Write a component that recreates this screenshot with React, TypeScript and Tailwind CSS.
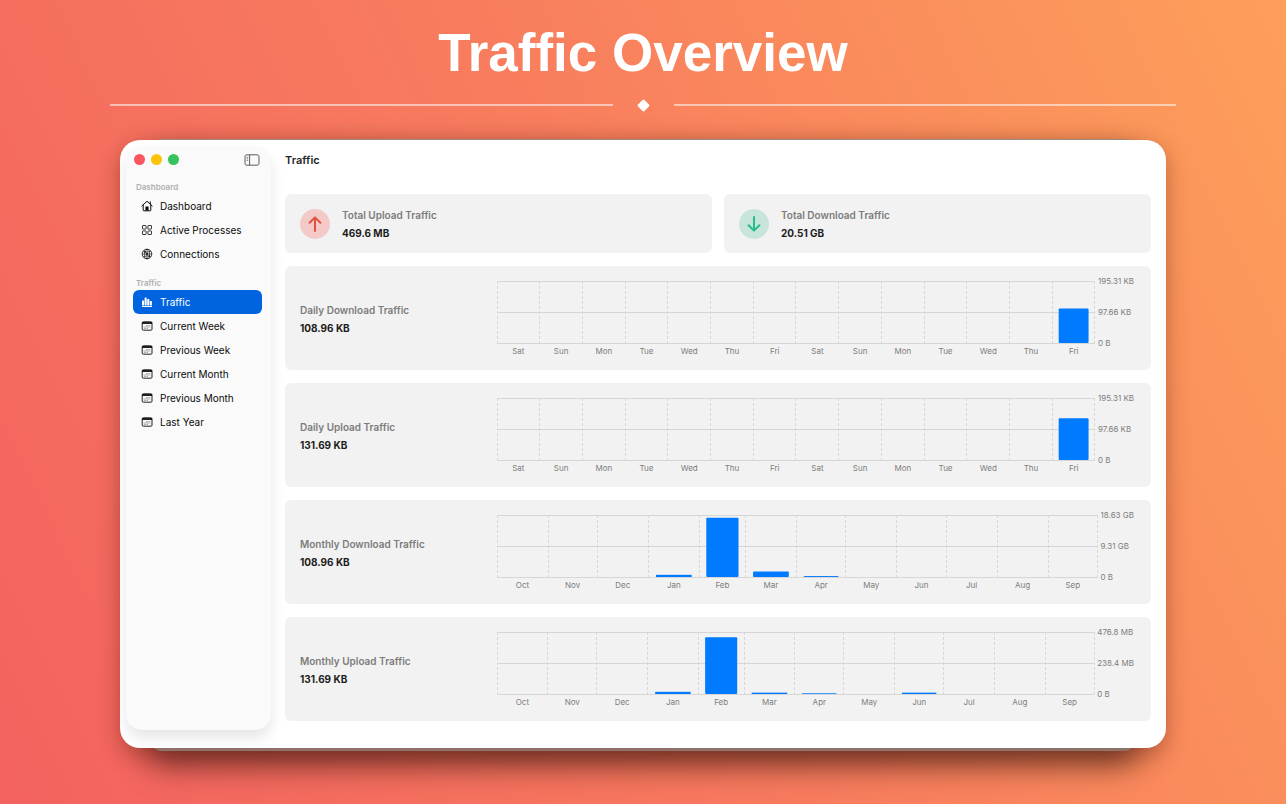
import { ReactNode } from "react";
import { clsx } from "clsx";

interface Column {
  label: string;
  days: number;
  value: number;
}

interface ChartCardProps {
  title: string;
  total: string;
  ticks: string[];
  columns: Column[];
}

const week = ["Sat", "Sun", "Mon", "Tue", "Wed", "Thu", "Fri"];

const months: [string, number][] = [
  ["Oct", 31],
  ["Nov", 30],
  ["Dec", 31],
  ["Jan", 31],
  ["Feb", 28],
  ["Mar", 31],
  ["Apr", 30],
  ["May", 31],
  ["Jun", 30],
  ["Jul", 31],
  ["Aug", 31],
  ["Sep", 30],
];

// values are a share of the top tick
const daily = (last: number): Column[] =>
  [...week, ...week].map((label, i) => ({ label, days: 1, value: i === 13 ? last : 0 }));

const monthly = (values: Record<string, number>): Column[] =>
  months.map(([label, days]) => ({ label, days, value: values[label] || 0 }));

const charts: ChartCardProps[] = [
  {
    title: "Daily Download Traffic",
    total: "108.96 KB",
    ticks: ["195.31 KB", "97.66 KB", "0 B"],
    columns: daily(0.558),
  },
  {
    title: "Daily Upload Traffic",
    total: "131.69 KB",
    ticks: ["195.31 KB", "97.66 KB", "0 B"],
    columns: daily(0.674),
  },
  {
    title: "Monthly Download Traffic",
    total: "108.96 KB",
    ticks: ["18.63 GB", "9.31 GB", "0 B"],
    columns: monthly({ Jan: 0.035, Feb: 0.955, Mar: 0.09, Apr: 0.015 }),
  },
  {
    title: "Monthly Upload Traffic",
    total: "131.69 KB",
    ticks: ["476.8 MB", "238.4 MB", "0 B"],
    columns: monthly({ Jan: 0.035, Feb: 0.915, Mar: 0.022, Apr: 0.012, Jun: 0.022 }),
  },
];

function HomeIcon() {
  return (
    <svg viewBox="0 0 12 12" className="size-3" fill="none" stroke="currentColor" strokeLinecap="round" strokeLinejoin="round">
      <path d="M.8 6 6 1.2 11.2 6M2.2 5v5.2q0 .6.6.6h6.4q.6 0 .6-.6V5M9.3 1.8v2" />
      <path d="M4.4 10.6V7q0-.4.4-.4h2.4q.4 0 .4.4v3.6z" fill="currentColor" stroke="none" />
    </svg>
  );
}

function GridIcon() {
  return (
    <svg viewBox="0 0 12 12" className="size-3" fill="none" stroke="currentColor" strokeWidth="0.8">
      <rect x="1.5" y="1.5" width="3.6" height="3.6" rx="0.5" />
      <rect x="6.9" y="1.5" width="3.6" height="3.6" rx="0.5" />
      <rect x="1.5" y="6.9" width="3.6" height="3.6" rx="0.5" />
      <rect x="6.9" y="6.9" width="3.6" height="3.6" rx="0.5" />
    </svg>
  );
}

function NetworkIcon() {
  return (
    <svg viewBox="0 0 12 12" className="size-3" fill="none" stroke="currentColor" strokeWidth="0.6">
      <circle cx="6" cy="6" r="4.8" strokeWidth="0.8" />
      <path d="M6 1.3v9.4M1.3 6h9.4M2.3 3.2q3.7 2 7.4 0M2.3 8.8q3.7-2 7.4 0" />
      <ellipse cx="6" cy="6" rx="2.6" ry="4.7" />
      <circle cx="6" cy="6" r="0.8" fill="currentColor" />
      <circle cx="4" cy="4" r="0.5" fill="currentColor" />
      <circle cx="8.2" cy="8" r="0.5" fill="currentColor" />
    </svg>
  );
}

function BarsIcon() {
  return (
    <svg viewBox="0 0 12 12" className="size-3" fill="currentColor">
      <rect x="1" y="4.6" width="2.1" height="4.8" rx="0.4" />
      <rect x="3.6" y="1.6" width="2.1" height="7.8" rx="0.4" />
      <rect x="6.2" y="3" width="2.1" height="6.4" rx="0.4" />
      <rect x="8.8" y="5" width="2.1" height="4.4" rx="0.4" />
      <rect x="0.8" y="10" width="10.4" height="0.9" rx="0.4" />
    </svg>
  );
}

function CalendarIcon() {
  return (
    <svg viewBox="0 0 12 12" className="size-3" fill="none" stroke="currentColor">
      <rect x="1.2" y="1.8" width="9.8" height="8.4" rx="1.1" strokeWidth="0.9" />
      <path d="M1.2 3h9.8" strokeWidth="1.8" />
      <g opacity="0.6">
        <path d="M5 5.6h4.4M2.8 7h6.6M2.8 8.4h4.6" strokeWidth="0.7" strokeDasharray="1 0.5" />
      </g>
    </svg>
  );
}

function SidebarIcon() {
  return (
    <svg viewBox="0 0 16 12" className="h-3 w-4" fill="none" stroke="currentColor">
      <rect x="1" y="0.8" width="14" height="10.4" rx="1.8" />
      <path d="M5.6 1v10" />
      <path d="M2.5 3.2h1.6M2.5 4.8h1.6M2.5 6.4h1.6" strokeWidth="0.7" />
    </svg>
  );
}

function ArrowIcon({ className }: { className?: string }) {
  return (
    <svg
      viewBox="0 0 18 18"
      className={clsx("size-[18px]", className)}
      fill="none"
      stroke="currentColor"
      strokeWidth="2"
      strokeLinecap="round"
      strokeLinejoin="round"
    >
      <path d="M9 16V2.4M3.6 7.8 9 2.4l5.4 5.4" />
    </svg>
  );
}

function NavItem({ icon, children, active }: { icon: ReactNode; children: ReactNode; active?: boolean }) {
  return (
    <li>
      <a
        href="#"
        aria-current={active ? "page" : undefined}
        className={clsx(
          "flex h-6 items-center gap-[7px] rounded-md pl-2 text-[10px]",
          active ? "bg-[#0064e1] text-white" : "text-[#0a0a0a]"
        )}
      >
        {icon}
        {children}
      </a>
    </li>
  );
}

function NavTitle({ children }: { children: ReactNode }) {
  return <h2 className="pl-[3px] text-[8px] leading-[14px] font-semibold text-[#b0b0b0]">{children}</h2>;
}

function Sidebar() {
  return (
    <aside className="mt-[6px] mb-[18px] ml-[6px] w-[145px] shrink-0 rounded-2xl bg-[#fafafa] pt-2 pr-[9px] pl-[7px] shadow-[0_8px_14px_rgba(0,0,0,0.1)]">
      <div className="flex h-[11px] items-center gap-[6px] pr-[2px] pl-px">
        <span className="size-[11px] rounded-full bg-[#fb5560]" />
        <span className="size-[11px] rounded-full bg-[#fdc309]" />
        <span className="size-[11px] rounded-full bg-[#37c35c]" />
        <button type="button" aria-label="Toggle sidebar" className="ml-auto text-[#5c5c5c]">
          <SidebarIcon />
        </button>
      </div>
      <nav className="flex flex-col gap-[10px] pt-[15px]">
        <section>
          <NavTitle>Dashboard</NavTitle>
          <ul>
            <NavItem icon={<HomeIcon />}>Dashboard</NavItem>
            <NavItem icon={<GridIcon />}>Active Processes</NavItem>
            <NavItem icon={<NetworkIcon />}>Connections</NavItem>
          </ul>
        </section>
        <section>
          <NavTitle>Traffic</NavTitle>
          <ul>
            <NavItem icon={<BarsIcon />} active>
              Traffic
            </NavItem>
            <NavItem icon={<CalendarIcon />}>Current Week</NavItem>
            <NavItem icon={<CalendarIcon />}>Previous Week</NavItem>
            <NavItem icon={<CalendarIcon />}>Current Month</NavItem>
            <NavItem icon={<CalendarIcon />}>Previous Month</NavItem>
            <NavItem icon={<CalendarIcon />}>Last Year</NavItem>
          </ul>
        </section>
      </nav>
    </aside>
  );
}

function Stat({ title, value }: { title: string; value: string }) {
  return (
    <div className="text-[10px] leading-[18px]">
      <h3 className="font-semibold text-[#7c7c7c]">{title}</h3>
      <p className="font-bold text-[#1d1d1d]">{value}</p>
    </div>
  );
}

function Plot({ columns }: { columns: Column[] }) {
  const total = columns.reduce((sum, c) => sum + c.days, 0);
  const starts = columns.map((_, i) => columns.slice(0, i).reduce((sum, c) => sum + c.days, 0));
  const pct = (n: number) => `${(n / total) * 100}%`;

  return (
    <svg className="block h-[62px] w-full overflow-visible" role="img" aria-label="Bar chart">
      <g stroke="#d8d8d8" strokeDasharray="3 2" shapeRendering="crispEdges">
        {[...starts, total].map((s) => (
          <line key={s} x1={pct(s)} x2={pct(s)} y1="0" y2="100%" />
        ))}
      </g>
      <g stroke="#d6d6d6" shapeRendering="crispEdges">
        <line x1="0" x2="100%" y1="0" y2="0" />
        <line x1="0" x2="100%" y1="50%" y2="50%" />
        <line x1="0" x2="100%" y1="100%" y2="100%" />
      </g>
      {columns.map((c, i) =>
        c.value > 0 ? (
          <rect
            key={i}
            x={pct(starts[i] + c.days * 0.15)}
            y={`${(1 - c.value) * 100}%`}
            width={pct(c.days * 0.7)}
            height={`${c.value * 100}%`}
            rx={c.value > 0.08 ? 1 : 0}
            fill="#007aff"
          />
        ) : null
      )}
    </svg>
  );
}

function ChartCard({ title, total, ticks, columns }: ChartCardProps) {
  return (
    <article className="flex h-[104px] rounded-md bg-[#f2f2f2] pt-[15px] pr-[17px] pl-[15px]">
      <div className="flex w-[197px] shrink-0 items-center pb-[14px]">
        <Stat title={title} value={total} />
      </div>
      <div className="min-w-0 flex-1">
        <Plot columns={columns} />
        <div className="flex pt-px">
          {columns.map((c, i) => (
            <span
              key={i}
              className="min-w-0 basis-0 text-center text-[8px] leading-[14px] text-[#7d7d7d]"
              style={{ flexGrow: c.days }}
            >
              {c.label}
            </span>
          ))}
        </div>
      </div>
      <div className="-mt-[6px] flex h-[74px] flex-col justify-between pl-[3px] text-[8px] leading-3 text-[#7d7d7d]">
        {ticks.map((t) => (
          <span key={t}>{t}</span>
        ))}
      </div>
    </article>
  );
}

export default function App() {
  return (
    <div className="min-h-screen bg-[linear-gradient(64deg,#f3625f_0%,#f87c5e_50%,#fd9f5a_100%)] font-[Inter,sans-serif]">
      <header className="px-[110px] pt-[22px]">
        <h1 className="text-center font-['Liberation_Sans',Arial,sans-serif] text-[53px] leading-[62px] font-bold text-white">
          Traffic Overview
        </h1>
        <div className="mt-4 flex h-[10px] items-center">
          <span className="h-[2px] flex-1 bg-white/55" />
          <span className="mx-[26px] size-[9px] rotate-45 rounded-[1px] bg-white" />
          <span className="h-[2px] flex-1 bg-white/55" />
        </div>
      </header>

      <div className="relative mt-[30px] px-[120px] pb-14">
        <div className="absolute inset-x-[150px] -top-px bottom-[53px] rounded-xl bg-[#a5948d] shadow-[0_14px_30px_rgba(40,15,10,0.6)]" />
        <div className="relative flex rounded-[20px] bg-white shadow-[0_8px_22px_rgba(90,30,15,0.38)]">
          <Sidebar />
          <main className="min-w-0 flex-1 pr-[15px] pb-[27px] pl-[14px]">
            <h2 className="pt-3 text-[11px] leading-4 font-semibold text-[#262626]">Traffic</h2>
            <div className="mt-[26px] flex flex-col gap-[13px]">
              <div className="grid grid-cols-2 gap-3">
                <article className="flex h-[59px] items-center gap-3 rounded-md bg-[#f2f2f2] pl-[15px]">
                  <span className="flex size-[30px] items-center justify-center rounded-full bg-[#f3cac7] text-[#e2503f]">
                    <ArrowIcon />
                  </span>
                  <Stat title="Total Upload Traffic" value="469.6 MB" />
                </article>
                <article className="flex h-[59px] items-center gap-3 rounded-md bg-[#f2f2f2] pl-[15px]">
                  <span className="flex size-[30px] items-center justify-center rounded-full bg-[#c7e5da] text-[#24bd8b]">
                    <ArrowIcon className="rotate-180" />
                  </span>
                  <Stat title="Total Download Traffic" value="20.51 GB" />
                </article>
              </div>
              {charts.map((chart) => (
                <ChartCard key={chart.title} {...chart} />
              ))}
            </div>
          </main>
        </div>
      </div>
    </div>
  );
}
